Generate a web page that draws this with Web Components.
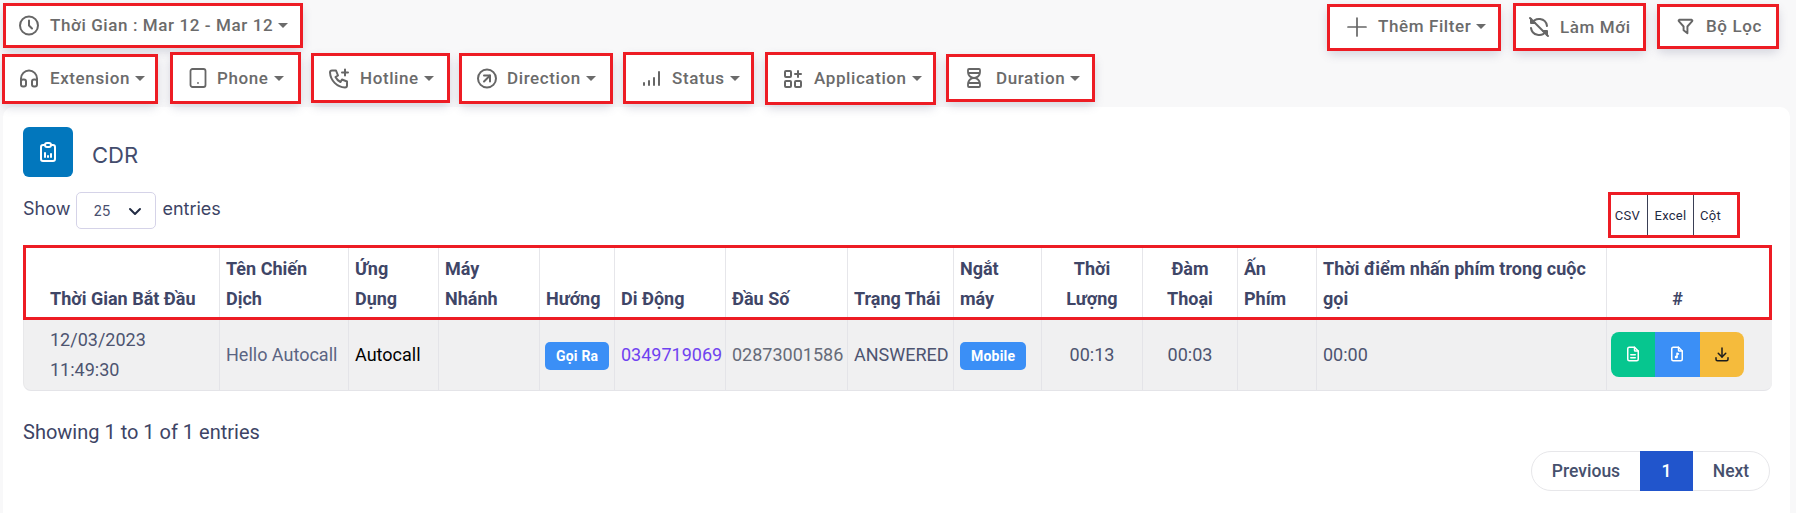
<!DOCTYPE html>
<html lang="vi">
<head>
<meta charset="utf-8">
<title>CDR</title>
<style>
  html, body { margin: 0; height: 513px; overflow: hidden; background: #f8f8f9; font-family: Roboto, "Liberation Sans", sans-serif; }
  .bar { display: flex; align-items: flex-start; }
  #top { height: 52px; justify-content: space-between; padding: 0 17px 0 3px; }
  #top div { display: flex; align-items: flex-start; }
  #filters { height: 55px; padding-left: 2px; }
  svg { display: block; }
</style>
</head>
<body>
<template id="chip-tpl">
  <style>
    :host {
      display: block;
      position: relative;
      box-sizing: border-box;
      flex: none;
      font: 500 17px/1 Roboto, sans-serif;
      letter-spacing: 0.6px;
      color: #6b6b6b;
    }
    .btn {
      box-sizing: border-box;
      height: 100%;
      display: flex;
      align-items: center;
      padding-left: var(--pad, 15px);
      padding-bottom: var(--pb, 0);
      background: #fff;
      border-radius: 7px;
      box-shadow: 0 4px 10px rgba(90, 95, 130, 0.22);
    }
    .icon { flex: none; width: var(--iw, 24px); margin-right: var(--ig, 9px); display: flex; justify-content: center; }
    .caret { width: 0; height: 0; margin-left: 5px; border: 5px solid transparent; border-top-color: #6b6b6b; border-bottom: 0; }
    .caret.off { display: none; }
    /* red annotation sits on top of the button */
    .mark { position: absolute; inset: 0; border: 3px solid #ed1c24; pointer-events: none; }
  </style>
  <div class="btn">
    <span class="icon"><slot name="icon"></slot></span>
    <span class="label"><slot></slot></span>
    <span class="caret"></span>
  </div>
  <div class="mark"></div>
</template>

<template id="card-tpl">
  <style>
    :host {
      display: block;
      box-sizing: border-box;
      height: 420px;
      margin: 0 6px 0 3px;
      padding: 20px 18px 0 20px;
      background: #fff;
      border-radius: 10px 10px 0 0;
      font-family: Roboto, sans-serif;
      color: #3d4465;
    }
    .head { display: flex; align-items: center; height: 50px; }
    .tile {
      width: 50px; height: 50px; border-radius: 6px; background: #0277bd;
      display: flex; align-items: center; justify-content: center; margin-right: 19px;
    }
    h2 { margin: 6px 0 0; font: 400 22px/1 Inter, sans-serif; color: #434c6d; }
    .tools { display: flex; justify-content: space-between; align-items: flex-start; height: 53px; margin-top: 15px; }
    .len { display: flex; align-items: center; height: 37px; font: 400 18px/1 Inter, sans-serif; gap: 6px; margin-top: -2px; }
    .sel {
      box-sizing: border-box; width: 80px; height: 37px; margin-top: 4px; border: 1px solid #d5d3e8; border-radius: 5px;
      display: flex; align-items: center; justify-content: space-between; padding: 0 13px 0 16px;
      font: 400 14px Inter, sans-serif; color: #4a5170;
    }
    .foot { margin-top: 29px; font: 400 20px/24px Roboto, sans-serif; color: #3d4465; }
    .pager { display: flex; justify-content: flex-end; margin: 7px 2px 0 0; }
  </style>
  <div class="head">
    <div class="tile"><slot name="logo"></slot></div>
    <h2><slot name="title"></slot></h2>
  </div>
  <div class="tools">
    <div class="len">Show
      <div class="sel">25
        <svg width="14" height="14" viewBox="0 0 14 14" fill="none" stroke="#222c44" stroke-width="2" stroke-linecap="round" stroke-linejoin="round"><path d="M2 5l5 5l5 -5"/></svg>
      </div>
      entries
    </div>
    <slot name="export"></slot>
  </div>
  <slot name="table"></slot>
  <div class="foot">Showing 1 to 1 of 1 entries</div>
  <div class="pager"><slot name="pager"></slot></div>
</template>

<template id="export-tpl">
  <style>
    :host {
      display: block; position: relative; box-sizing: border-box; width: 132px; height: 46px; margin-right: 32px;
      font: 400 13px/1 Roboto, sans-serif; color: #1f2a44; letter-spacing: 0.3px;
    }
    .group { display: flex; height: 100%; border-right: 1px solid #3a3f55; box-sizing: border-box; }
    .group span { display: flex; align-items: center; justify-content: center; box-sizing: border-box; border-left: 1px solid #3a3f55; }
    .group span:nth-child(1) { width: 39px; border-left: 0; }
    .group span:nth-child(2) { width: 46px; }
    .group span:nth-child(3) { width: 43px; padding-right: 9px; }
    .mark { position: absolute; inset: 0; border: 3px solid #ed1c24; }
  </style>
  <div class="group"><span>CSV</span><span>Excel</span><span>Cột</span></div>
  <div class="mark"></div>
</template>

<template id="badge-tpl">
  <style>
    :host {
      display: inline-flex; align-items: center; justify-content: center; box-sizing: border-box;
      height: 28px; padding: 0 11px; border-radius: 5px; background: #3b8ff6;
      color: #fff; font: 700 14px/1 Roboto, sans-serif; letter-spacing: 0.2px; vertical-align: middle;
    }
  </style>
  <slot></slot>
</template>

<template id="actions-tpl">
  <style>
    :host { display: inline-flex; border-radius: 8px; overflow: hidden; vertical-align: middle; margin-top: -2px; }
    span { width: 44.3px; height: 45px; display: flex; align-items: center; justify-content: center; }
    .a { background: #06c68f; } .b { background: #3b8ff6; } .c { background: #f5bb3c; }
  </style>
  <span class="a"><svg width="18" height="18" viewBox="0 0 24 24" fill="none" stroke="#fff" stroke-width="2" stroke-linecap="round" stroke-linejoin="round"><path d="M14 3v4a1 1 0 0 0 1 1h4"/><path d="M17 21h-10a2 2 0 0 1 -2 -2v-14a2 2 0 0 1 2 -2h7l5 5v11a2 2 0 0 1 -2 2z"/><path d="M9 13h6"/><path d="M9 17h6"/></svg></span>
  <span class="b"><svg width="18" height="18" viewBox="0 0 24 24" fill="none" stroke="#fff" stroke-width="2" stroke-linecap="round" stroke-linejoin="round"><path d="M14 3v4a1 1 0 0 0 1 1h4"/><path d="M17 21h-10a2 2 0 0 1 -2 -2v-14a2 2 0 0 1 2 -2h7l5 5v11a2 2 0 0 1 -2 2z"/><path d="M11 16m-1 0a1 1 0 1 0 2 0a1 1 0 1 0 -2 0"/><path d="M12 16v-5l2 1"/></svg></span>
  <span class="c"><svg width="18" height="18" viewBox="0 0 24 24" fill="none" stroke="#1c1c1c" stroke-width="2" stroke-linecap="round" stroke-linejoin="round"><path d="M4 17v2a2 2 0 0 0 2 2h12a2 2 0 0 0 2 -2v-2"/><path d="M7 11l5 5l5 -5"/><path d="M12 4l0 12"/></svg></span>
</template>

<template id="table-tpl">
  <style>
    :host { display: block; position: relative; width: 1749px; font: 400 18px/30px Roboto, sans-serif; }
    table { width: 100%; table-layout: fixed; border-collapse: separate; border-spacing: 0; }
    th {
      height: 75px; box-sizing: border-box; padding: 9px 6px 6px; vertical-align: bottom; text-align: left;
      font-weight: 700; color: #3f4667; border-right: 1px solid #e6e6ea;
    }
    td {
      height: 71px; box-sizing: border-box; padding: 0 6px; background: #f0f0f1; color: #4d5470;
      border-right: 1px solid #e4e4e8; border-bottom: 1px solid #e4e4e8;
    }
    th:last-child, td:last-child { border-right: 0; }
    th:last-child { padding-right: 30px; }
    td:first-child { border-bottom-left-radius: 8px; border-left: 1px solid #e8e8ea; }
    td:last-child { border-bottom-right-radius: 8px; }
    th:first-child { padding-left: 27px; }
    td:first-child { padding-left: 26px; }
    .c { text-align: center; }
    .ph { color: #6f42f0; } .no { color: #666b78; } .blk { color: #000; } .soft { color: #5a6482; }
    .mark { position: absolute; left: 0; right: 0; top: 0; height: 75px; box-sizing: border-box; border: 3px solid #ed1c24; }
  </style>
  <table>
    <colgroup>
      <col style="width:197px"><col style="width:129px"><col style="width:90px"><col style="width:101px">
      <col style="width:75px"><col style="width:111px"><col style="width:122px"><col style="width:106px">
      <col style="width:88px"><col style="width:101px"><col style="width:95px"><col style="width:79px">
      <col style="width:290px"><col>
    </colgroup>
    <thead>
      <tr>
        <th>Thời Gian Bắt Đầu</th><th>Tên Chiến Dịch</th><th>Ứng Dụng</th><th>Máy Nhánh</th><th>Hướng</th>
        <th>Di Động</th><th>Đầu Số</th><th>Trạng Thái</th><th>Ngắt máy</th>
        <th class="c">Thời Lượng</th><th class="c">Đàm Thoại</th><th>Ấn Phím</th>
        <th>Thời điểm nhấn phím trong cuộc gọi</th><th class="c">#</th>
      </tr>
    </thead>
    <tbody>
      <tr>
        <td>12/03/2023<br>11:49:30</td><td class="soft">Hello Autocall</td><td class="blk">Autocall</td><td></td>
        <td style="padding:0 0 0 5px"><cdr-badge>Gọi Ra</cdr-badge></td><td class="ph">0349719069</td><td class="no">02873001586</td>
        <td>ANSWERED</td><td><cdr-badge>Mobile</cdr-badge></td>
        <td class="c">00:13</td><td class="c">00:03</td><td></td><td>00:00</td>
        <td style="padding-left:4px"><cdr-actions></cdr-actions></td>
      </tr>
    </tbody>
  </table>
  <div class="mark"></div>
</template>

<template id="pager-tpl">
  <style>
    :host {
      display: flex; box-sizing: border-box; height: 40px; width: 239px; border: 1px solid #e7e7ea; border-radius: 20px;
      font: 500 17.5px/38px Roboto, sans-serif; color: #46506d;
    }
    span { text-align: center; }
    .prev { width: 108px; }
    .cur { width: 53px; height: 40px; margin-top: -1px; background: #2155cc; color: #fff; line-height: 40px; }
    .next { flex: 1; }
  </style>
  <span class="prev">Previous</span><span class="cur">1</span><span class="next">Next</span>
</template>

<div class="bar" id="top">
  <filter-chip style="width:300px;height:45px;margin-top:3px;--pad:14px">
    <svg slot="icon" width="25" height="25" viewBox="0 0 24 24" fill="none" stroke="#666" stroke-width="2" stroke-linecap="round" stroke-linejoin="round"><circle cx="12" cy="12" r="9"/><path d="M12 7v5l3 3"/></svg>
    Thời Gian : Mar 12 - Mar 12
  </filter-chip>
  <div>
    <filter-chip style="width:174px;height:47px;margin-top:4px;margin-right:12px;--pad:18px;--pb:2px" >
      <svg slot="icon" width="24" height="24" viewBox="0 0 24 24" fill="none" stroke="#666" stroke-width="1.7" stroke-linecap="round"><path d="M12 3v18"/><path d="M3 12h18"/></svg>
      Thêm Filter
    </filter-chip>
    <filter-chip no-caret style="width:133px;height:48px;margin-top:3px;margin-right:11px;--pad:14px">
      <svg slot="icon" width="24" height="24" viewBox="0 0 24 24" fill="none" stroke="#666" stroke-width="2" stroke-linecap="round" stroke-linejoin="round"><path d="M20 11a8.1 8.1 0 0 0 -6.986 -6.918a8.095 8.095 0 0 0 -8.019 3.918"/><path d="M4 4v4h4"/><path d="M4 13a8.1 8.1 0 0 0 15 3"/><path d="M20 20v-4h-4"/><path d="M3 3l18 18"/></svg>
      Làm Mới
    </filter-chip>
    <filter-chip no-caret style="width:122px;height:45px;margin-top:4px;--pad:16px">
      <svg slot="icon" width="23" height="23" viewBox="0 0 24 24" fill="none" stroke="#666" stroke-width="2" stroke-linecap="round" stroke-linejoin="round"><path d="M5.5 5h13a1 1 0 0 1 .5 1.5l-5 5.5v7l-4 -3v-4l-5 -5.5a1 1 0 0 1 .5 -1.5"/></svg>
      Bộ Lọc
    </filter-chip>
  </div>
</div>

<div class="bar" id="filters">
  <filter-chip style="width:156px;height:50px;margin-top:2px;margin-right:12px;--pad:15px;--pb:2px">
    <svg slot="icon" width="25" height="25" viewBox="0 0 24 24" fill="none" stroke="#666" stroke-width="2" stroke-linecap="round" stroke-linejoin="round"><path d="M4 13m0 2a2 2 0 0 1 2 -2h1a2 2 0 0 1 2 2v3a2 2 0 0 1 -2 2h-1a2 2 0 0 1 -2 -2z"/><path d="M15 13m0 2a2 2 0 0 1 2 -2h1a2 2 0 0 1 2 2v3a2 2 0 0 1 -2 2h-1a2 2 0 0 1 -2 -2z"/><path d="M4 15v-3a8 8 0 0 1 16 0v3"/></svg>
    Extension
  </filter-chip>
  <filter-chip style="width:131px;height:52px;margin-right:10px;--pad:16px;--ig:7px">
    <svg slot="icon" width="26" height="26" viewBox="0 0 24 24" fill="none" stroke="#666" stroke-width="1.8" stroke-linecap="round" stroke-linejoin="round"><rect x="4.5" y="3" width="15" height="18" rx="2"/><path d="M12 17v.01"/></svg>
    Phone
  </filter-chip>
  <filter-chip style="width:139px;height:50px;margin-top:1px;margin-right:9px;--pad:16px;--ig:9px">
    <svg slot="icon" width="25" height="25" viewBox="0 0 24 24" fill="none" stroke="#666" stroke-width="2" stroke-linecap="round" stroke-linejoin="round"><path d="M5 4h4l2 5l-2.5 1.5a11 11 0 0 0 5 5l1.5 -2.5l5 2v4a2 2 0 0 1 -2 2a16 16 0 0 1 -15 -15a2 2 0 0 1 2 -2"/><path d="M15 6h6m-3 -3v6"/></svg>
    Hotline
  </filter-chip>
  <filter-chip style="width:154px;height:51px;margin-top:1px;margin-right:10px;--pad:16px;--ig:8px">
    <svg slot="icon" width="25" height="25" viewBox="0 0 24 24" fill="none" stroke="#666" stroke-width="2" stroke-linecap="round" stroke-linejoin="round"><circle cx="12" cy="12" r="9"/><path d="M15 9l-6 6"/><path d="M15 15v-6h-6"/></svg>
    Direction
  </filter-chip>
  <filter-chip style="width:131px;height:52px;margin-right:11px;--pad:16px;--ig:9px">
    <svg slot="icon" width="20" height="20" viewBox="0 0 20 20" fill="none" stroke="#666" stroke-width="2" stroke-linecap="round"><path d="M3 17v-2"/><path d="M8 17v-4"/><path d="M13 17v-7"/><path d="M18 17v-13"/></svg>
    Status
  </filter-chip>
  <filter-chip style="width:171px;height:53px;margin-right:10px;--pad:16px;--ig:9px">
    <svg slot="icon" width="24" height="24" viewBox="0 0 24 24" fill="none" stroke="#666" stroke-width="2" stroke-linecap="round" stroke-linejoin="round"><rect x="4" y="4" width="6" height="6" rx="1"/><rect x="4" y="14" width="6" height="6" rx="1"/><rect x="14" y="14" width="6" height="6" rx="1"/><path d="M14 7h6"/><path d="M17 4v6"/></svg>
    Application
  </filter-chip>
  <filter-chip style="width:149px;height:48px;margin-top:2px;--pad:16px;--ig:10px">
    <svg slot="icon" width="28" height="28" viewBox="0 0 24 24" fill="none" stroke="#666" stroke-width="1.8" stroke-linecap="round" stroke-linejoin="round"><path d="M6.5 7h11"/><path d="M6.5 17h11"/><path d="M6 20v-2a6 6 0 1 1 12 0v2a1 1 0 0 1 -1 1h-10a1 1 0 0 1 -1 -1z"/><path d="M6 4v2a6 6 0 1 0 12 0v-2a1 1 0 0 0 -1 -1h-10a1 1 0 0 0 -1 1z"/></svg>
    Duration
  </filter-chip>
</div>

<cdr-card>
  <svg slot="logo" width="24" height="24" viewBox="0 0 24 24" fill="none" stroke="#fff" stroke-width="2" stroke-linecap="round" stroke-linejoin="round"><path d="M9 5h-2a2 2 0 0 0 -2 2v12a2 2 0 0 0 2 2h10a2 2 0 0 0 2 -2v-12a2 2 0 0 0 -2 -2h-2"/><path d="M9 3m0 2a2 2 0 0 1 2 -2h2a2 2 0 0 1 2 2v0a2 2 0 0 1 -2 2h-2a2 2 0 0 1 -2 -2z"/><path d="M9 17v-4"/><path d="M12 17v-1"/><path d="M15 17v-3"/></svg>
  <span slot="title">CDR</span>
  <cdr-export slot="export"></cdr-export>
  <cdr-table slot="table"></cdr-table>
  <cdr-pager slot="pager"></cdr-pager>
</cdr-card>

<script>
  // every element here just stamps its template into an open shadow root
  function define(tag, tplId, after) {
    customElements.define(tag, class extends HTMLElement {
      constructor() {
        super();
        this.attachShadow({ mode: "open" });
        this.shadowRoot.appendChild(document.getElementById(tplId).content.cloneNode(true));
      }
      connectedCallback() {
        if (after) after(this);
      }
    });
  }

  define("filter-chip", "chip-tpl", (el) => {
    if (el.hasAttribute("no-caret")) {
      el.shadowRoot.querySelector(".caret").classList.add("off");
    }
  });
  define("cdr-card", "card-tpl");
  define("cdr-export", "export-tpl");
  define("cdr-badge", "badge-tpl");
  define("cdr-actions", "actions-tpl");
  define("cdr-table", "table-tpl");
  define("cdr-pager", "pager-tpl");
</script>
</body>
</html>
